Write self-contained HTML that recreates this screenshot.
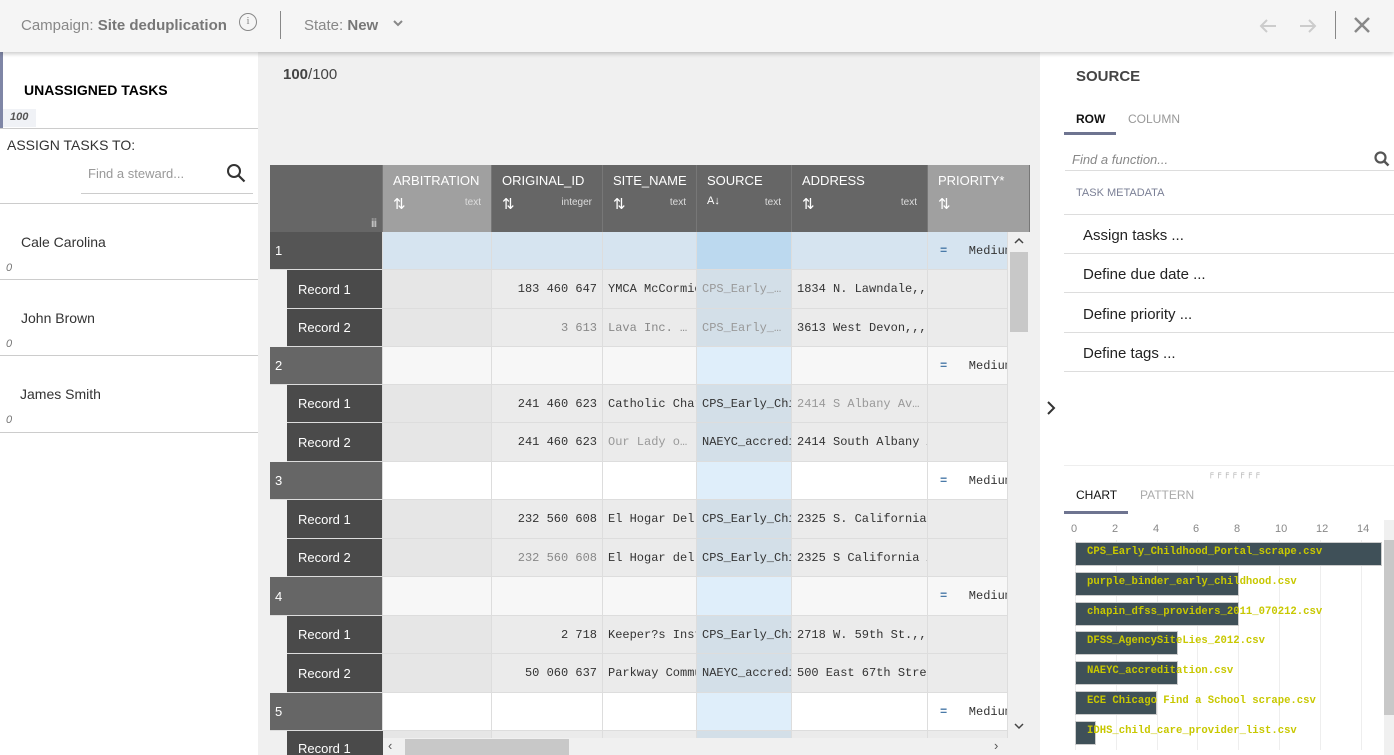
<!DOCTYPE html>
<html style="overflow:hidden;width:1394px;height:755px"><head><meta charset="utf-8"><style>
*{box-sizing:border-box;margin:0;padding:0}
body{width:1394px;height:755px;overflow:hidden;background:#f0f0f0;font-family:"Liberation Sans",sans-serif;position:relative}
.a{position:absolute}
.top{left:0;top:0;width:1394px;height:52px;background:#f5f5f5;box-shadow:0 2px 4px rgba(0,0,0,.2);z-index:5;color:#888;font-size:15px}
.left{left:0;top:52px;width:258px;height:703px;background:#fff}
.right{left:1040px;top:52px;width:354px;height:703px;background:#fff}
.row{position:absolute;left:270px;width:738px}
.c{position:absolute;top:0;bottom:0;border-right:1px solid #ddd;border-bottom:1px solid #ddd;font-family:"Liberation Mono",monospace;font-size:12px;color:#333;white-space:nowrap;overflow:hidden;padding:0 5px;display:flex;align-items:center}
.m{padding-left:12px}
.hd{position:absolute;top:165px;height:67px;background:#666;color:#fff;font-size:13px;padding:8px 10px;border-right:1px solid #777}
.hd small{position:absolute;right:10px;top:32px;font-size:10px;color:#ddd}
.hd i{position:absolute;left:10px;top:30px;font-style:normal;font-size:15px}
.steward{position:absolute;left:0;width:258px;border-bottom:1px solid #ccc;font-size:14px;color:#333}
.steward b{position:absolute;left:6px;font-style:italic;font-weight:normal;font-size:11px;color:#777}
.menu{position:absolute;left:1064px;width:330px;height:39px;border-bottom:1px solid #ddd;font-size:15px;color:#222;padding:12px 19px}
.bar{position:absolute;left:1075px;height:24px;background:#3f5058;border:1px solid #ccc}
.bl{position:absolute;left:1087px;font-family:"Liberation Mono",monospace;font-size:10.6px;color:#c8c800;font-weight:bold}
</style></head><body>
<div class="a top">
 <div class="a" style="left:21px;top:17px">Campaign: <b style="color:#777">Site deduplication</b></div>
 <div class="a" style="left:239px;top:13px;width:18px;height:18px;border:1.5px solid #888;border-radius:50%;font-size:11px;text-align:center;line-height:15px;font-family:'Liberation Serif',serif">i</div>
 <div class="a" style="left:280px;top:11px;width:1px;height:28px;background:#888"></div>
 <div class="a" style="left:304px;top:17px">State: <b style="color:#777">New</b></div>
 <svg class="a" style="left:392px;top:18px" width="12" height="10"><path d="M2 3l4 4 4-4" stroke="#888" stroke-width="2" fill="none"/></svg>
 <svg class="a" style="left:1258px;top:16px" width="20" height="20"><path d="M18 10H3M9 4L3 10l6 6" stroke="#ccc" stroke-width="2" fill="none"/></svg>
 <svg class="a" style="left:1298px;top:16px" width="20" height="20"><path d="M2 10h15M11 4l6 6-6 6" stroke="#ccc" stroke-width="2" fill="none"/></svg>
 <div class="a" style="left:1335px;top:11px;width:1px;height:28px;background:#888"></div>
 <svg class="a" style="left:1353px;top:16px" width="18" height="18"><path d="M2 2l14 14M16 2L2 16" stroke="#888" stroke-width="2.5"/></svg>
</div>

<div class="a left">
 <div class="a" style="left:0;top:0;width:3px;height:76px;background:#7f86a6"></div>
 <div class="a" style="left:24px;top:30px;font-size:14px;font-weight:bold;color:#000">UNASSIGNED TASKS</div>
 <div class="a" style="left:3px;top:57px;width:33px;height:18px;background:#f0f2f6;font-size:11px;font-style:italic;font-weight:bold;color:#555;padding:2px 7px">100</div>
 <div class="a" style="left:0;top:76px;width:258px;height:1px;background:#ccc"></div>
 <div class="a" style="left:7px;top:85px;font-size:14px;color:#333">ASSIGN TASKS TO:</div>
 <div class="a" style="left:88px;top:114px;font-size:13px;color:#999">Find a steward...</div>
 <svg class="a" style="left:226px;top:111px" width="20" height="20"><circle cx="8" cy="8" r="6" stroke="#333" stroke-width="2" fill="none"/><path d="M12.5 12.5l6 6" stroke="#333" stroke-width="2.2"/></svg>
 <div class="a" style="left:81px;top:141px;width:172px;height:1px;background:#ccc"></div>
 <div class="a" style="left:0;top:151px;width:258px;height:1px;background:#ccc"></div>
 <div class="steward" style="top:152px;height:76px"><span class="a" style="left:21px;top:30px">Cale Carolina</span><b style="top:58px">0</b></div>
 <div class="steward" style="top:228px;height:76px"><span class="a" style="left:21px;top:30px">John Brown</span><b style="top:58px">0</b></div>
 <div class="steward" style="top:304px;height:77px"><span class="a" style="left:20px;top:30px">James Smith</span><b style="top:58px">0</b></div>
</div>

<div class="a" style="left:283px;top:66px;font-size:15px;color:#444"><b>100</b>/100</div>

<div class="hd" style="left:270px;width:113px"><span class="a" style="right:6px;bottom:2px;font-size:12px;color:#ccc;letter-spacing:-1px">iii</span></div>
<div class="hd" style="left:383px;width:109px;background:#a0a0a0">ARBITRATION<i>⇅</i><small>text</small></div>
<div class="hd" style="left:492px;width:111px">ORIGINAL_ID<i>⇅</i><small>integer</small></div>
<div class="hd" style="left:603px;width:94px">SITE_NAME<i>⇅</i><small>text</small></div>
<div class="hd" style="left:697px;width:95px">SOURCE<i style="font-size:11px">A↓</i><small>text</small></div>
<div class="hd" style="left:792px;width:136px">ADDRESS<i>⇅</i><small>text</small></div>
<div class="hd" style="left:928px;width:102px;background:#a0a0a0">PRIORITY*<i>⇅</i></div>

<div class="a" style="left:270px;top:232px;width:738px;height:506px;overflow:hidden">
<div style="position:absolute;left:-270px;top:-232px;width:1100px;height:1000px">
<div class="row" style="top:232px;height:38px">
 <div class="c" style="left:0;width:113px;background:#555;color:#fff;font-family:'Liberation Sans';font-size:13px">1</div>
 <div class="c" style="left:113px;width:109px;background:#d6e4f0"></div>
 <div class="c" style="left:222px;width:111px;background:#d6e4f0"></div>
 <div class="c" style="left:333px;width:94px;background:#d6e4f0"></div>
 <div class="c" style="left:427px;width:95px;background:#bcd9ef"></div>
 <div class="c" style="left:522px;width:136px;background:#d6e4f0"></div>
 <div class="c m" style="left:658px;width:80px;background:#d6e4f0"><span style="color:#4a7aa8;font-weight:bold">=</span>&nbsp;&nbsp;&nbsp;Medium</div>
</div>
<div class="row" style="top:270px;height:39px"><div class="c" style="left:0;width:17px;background:#f0f0f0;border:0"></div><div class="c" style="left:17px;width:96px;background:#4a4a4a;color:#fff;font-family:'Liberation Sans';font-size:13px;padding-left:11px">Record 1</div><div class="c" style="left:113px;width:109px;background:#e6e6e6"></div><div class="c" style="left:222px;width:111px;background:#ebebeb;justify-content:flex-end">183 460 647</div><div class="c" style="left:333px;width:94px;background:#ebebeb">YMCA McCormick</div><div class="c" style="left:427px;width:95px;background:#d3dfe8;color:#999">CPS_Early_…</div><div class="c" style="left:522px;width:136px;background:#ebebeb">1834 N. Lawndale,,</div><div class="c" style="left:658px;width:80px;background:#ebebeb"></div></div>
<div class="row" style="top:309px;height:38px"><div class="c" style="left:0;width:17px;background:#f0f0f0;border:0"></div><div class="c" style="left:17px;width:96px;background:#4a4a4a;color:#fff;font-family:'Liberation Sans';font-size:13px;padding-left:11px">Record 2</div><div class="c" style="left:113px;width:109px;background:#e6e6e6"></div><div class="c" style="left:222px;width:111px;background:#ebebeb;justify-content:flex-end;color:#888">3 613</div><div class="c" style="left:333px;width:94px;background:#ebebeb;color:#888">Lava Inc. …</div><div class="c" style="left:427px;width:95px;background:#d3dfe8;color:#999">CPS_Early_…</div><div class="c" style="left:522px;width:136px;background:#ebebeb">3613 West Devon,,,</div><div class="c" style="left:658px;width:80px;background:#ebebeb"></div></div>

<div class="row" style="top:347px;height:38px"><div class="c" style="left:0;width:113px;background:#666;color:#fff;font-family:'Liberation Sans';font-size:13px">2</div><div class="c" style="left:113px;width:109px;background:#f7f7f7"></div><div class="c" style="left:222px;width:111px;background:#f7f7f7"></div><div class="c" style="left:333px;width:94px;background:#f7f7f7"></div><div class="c" style="left:427px;width:95px;background:#dfeefa"></div><div class="c" style="left:522px;width:136px;background:#f7f7f7"></div><div class="c m" style="left:658px;width:80px;background:#f7f7f7"><span style="color:#4a7aa8;font-weight:bold">=</span>&nbsp;&nbsp;&nbsp;Medium</div></div>
<div class="row" style="top:385px;height:38px"><div class="c" style="left:0;width:17px;background:#f0f0f0;border:0"></div><div class="c" style="left:17px;width:96px;background:#4a4a4a;color:#fff;font-family:'Liberation Sans';font-size:13px;padding-left:11px">Record 1</div><div class="c" style="left:113px;width:109px;background:#e6e6e6"></div><div class="c" style="left:222px;width:111px;background:#ebebeb;justify-content:flex-end">241 460 623</div><div class="c" style="left:333px;width:94px;background:#ebebeb">Catholic Charities</div><div class="c" style="left:427px;width:95px;background:#d3dfe8">CPS_Early_Childhood</div><div class="c" style="left:522px;width:136px;background:#ebebeb;color:#999">2414 S Albany Av…</div><div class="c" style="left:658px;width:80px;background:#ebebeb"></div></div>
<div class="row" style="top:423px;height:39px"><div class="c" style="left:0;width:17px;background:#f0f0f0;border:0"></div><div class="c" style="left:17px;width:96px;background:#4a4a4a;color:#fff;font-family:'Liberation Sans';font-size:13px;padding-left:11px">Record 2</div><div class="c" style="left:113px;width:109px;background:#e6e6e6"></div><div class="c" style="left:222px;width:111px;background:#ebebeb;justify-content:flex-end">241 460 623</div><div class="c" style="left:333px;width:94px;background:#ebebeb;color:#999">Our Lady o…</div><div class="c" style="left:427px;width:95px;background:#d3dfe8">NAEYC_accreditation</div><div class="c" style="left:522px;width:136px;background:#ebebeb">2414 South Albany Ave</div><div class="c" style="left:658px;width:80px;background:#ebebeb"></div></div>

<div class="row" style="top:462px;height:38px"><div class="c" style="left:0;width:113px;background:#666;color:#fff;font-family:'Liberation Sans';font-size:13px">3</div><div class="c" style="left:113px;width:109px;background:#fff"></div><div class="c" style="left:222px;width:111px;background:#fff"></div><div class="c" style="left:333px;width:94px;background:#fff"></div><div class="c" style="left:427px;width:95px;background:#dfeefa"></div><div class="c" style="left:522px;width:136px;background:#fff"></div><div class="c m" style="left:658px;width:80px;background:#fff"><span style="color:#4a7aa8;font-weight:bold">=</span>&nbsp;&nbsp;&nbsp;Medium</div></div>
<div class="row" style="top:500px;height:39px"><div class="c" style="left:0;width:17px;background:#f0f0f0;border:0"></div><div class="c" style="left:17px;width:96px;background:#4a4a4a;color:#fff;font-family:'Liberation Sans';font-size:13px;padding-left:11px">Record 1</div><div class="c" style="left:113px;width:109px;background:#e6e6e6"></div><div class="c" style="left:222px;width:111px;background:#ebebeb;justify-content:flex-end">232 560 608</div><div class="c" style="left:333px;width:94px;background:#ebebeb">El Hogar Del Nino</div><div class="c" style="left:427px;width:95px;background:#d3dfe8">CPS_Early_Childhood</div><div class="c" style="left:522px;width:136px;background:#ebebeb">2325 S. California</div><div class="c" style="left:658px;width:80px;background:#ebebeb"></div></div>
<div class="row" style="top:539px;height:38px"><div class="c" style="left:0;width:17px;background:#f0f0f0;border:0"></div><div class="c" style="left:17px;width:96px;background:#4a4a4a;color:#fff;font-family:'Liberation Sans';font-size:13px;padding-left:11px">Record 2</div><div class="c" style="left:113px;width:109px;background:#e6e6e6"></div><div class="c" style="left:222px;width:111px;background:#ebebeb;justify-content:flex-end;color:#888">232 560 608</div><div class="c" style="left:333px;width:94px;background:#ebebeb">El Hogar del Nino</div><div class="c" style="left:427px;width:95px;background:#d3dfe8">CPS_Early_Childhood</div><div class="c" style="left:522px;width:136px;background:#ebebeb">2325 S California Ave</div><div class="c" style="left:658px;width:80px;background:#ebebeb"></div></div>

<div class="row" style="top:577px;height:39px"><div class="c" style="left:0;width:113px;background:#666;color:#fff;font-family:'Liberation Sans';font-size:13px">4</div><div class="c" style="left:113px;width:109px;background:#f7f7f7"></div><div class="c" style="left:222px;width:111px;background:#f7f7f7"></div><div class="c" style="left:333px;width:94px;background:#f7f7f7"></div><div class="c" style="left:427px;width:95px;background:#dfeefa"></div><div class="c" style="left:522px;width:136px;background:#f7f7f7"></div><div class="c m" style="left:658px;width:80px;background:#f7f7f7"><span style="color:#4a7aa8;font-weight:bold">=</span>&nbsp;&nbsp;&nbsp;Medium</div></div>
<div class="row" style="top:616px;height:38px"><div class="c" style="left:0;width:17px;background:#f0f0f0;border:0"></div><div class="c" style="left:17px;width:96px;background:#4a4a4a;color:#fff;font-family:'Liberation Sans';font-size:13px;padding-left:11px">Record 1</div><div class="c" style="left:113px;width:109px;background:#e6e6e6"></div><div class="c" style="left:222px;width:111px;background:#ebebeb;justify-content:flex-end">2 718</div><div class="c" style="left:333px;width:94px;background:#ebebeb">Keeper?s Institute</div><div class="c" style="left:427px;width:95px;background:#d3dfe8">CPS_Early_Childhood</div><div class="c" style="left:522px;width:136px;background:#ebebeb">2718 W. 59th St.,,</div><div class="c" style="left:658px;width:80px;background:#ebebeb"></div></div>
<div class="row" style="top:654px;height:39px"><div class="c" style="left:0;width:17px;background:#f0f0f0;border:0"></div><div class="c" style="left:17px;width:96px;background:#4a4a4a;color:#fff;font-family:'Liberation Sans';font-size:13px;padding-left:11px">Record 2</div><div class="c" style="left:113px;width:109px;background:#e6e6e6"></div><div class="c" style="left:222px;width:111px;background:#ebebeb;justify-content:flex-end">50 060 637</div><div class="c" style="left:333px;width:94px;background:#ebebeb">Parkway Community</div><div class="c" style="left:427px;width:95px;background:#d3dfe8">NAEYC_accreditation</div><div class="c" style="left:522px;width:136px;background:#ebebeb">500 East 67th Street</div><div class="c" style="left:658px;width:80px;background:#ebebeb"></div></div>

<div class="row" style="top:693px;height:38px"><div class="c" style="left:0;width:113px;background:#666;color:#fff;font-family:'Liberation Sans';font-size:13px">5</div><div class="c" style="left:113px;width:109px;background:#fff"></div><div class="c" style="left:222px;width:111px;background:#fff"></div><div class="c" style="left:333px;width:94px;background:#fff"></div><div class="c" style="left:427px;width:95px;background:#dfeefa"></div><div class="c" style="left:522px;width:136px;background:#fff"></div><div class="c m" style="left:658px;width:80px;background:#fff"><span style="color:#4a7aa8;font-weight:bold">=</span>&nbsp;&nbsp;&nbsp;Medium</div></div>
<div class="row" style="top:731px;height:38px"><div class="c" style="left:0;width:17px;background:#f0f0f0;border:0"></div><div class="c" style="left:17px;width:96px;background:#4a4a4a;border:0"></div><div class="c" style="left:113px;width:109px;background:#e6e6e6"></div><div class="c" style="left:222px;width:111px;background:#ebebeb"></div><div class="c" style="left:333px;width:94px;background:#ebebeb"></div><div class="c" style="left:427px;width:95px;background:#d3dfe8"></div><div class="c" style="left:522px;width:136px;background:#ebebeb"></div><div class="c" style="left:658px;width:80px;background:#ebebeb"></div></div>
</div></div>
<div class="a" style="left:287px;top:738px;width:96px;height:17px;background:#4a4a4a;color:#fff;font-size:13px;padding:3px 11px;overflow:hidden">Record 1</div>
<div class="a" style="left:383px;top:738px;width:625px;height:17px;background:#f0f0f0"></div>
<div class="a" style="left:405px;top:739px;width:164px;height:16px;background:#c8c8c8"></div>
<div class="a" style="left:388px;top:738px;font-size:13px;color:#555">‹</div>
<div class="a" style="left:994px;top:738px;font-size:13px;color:#555">›</div>
<div class="a" style="left:1008px;top:232px;width:22px;height:506px;background:#f0f0f0"></div>
<div class="a" style="left:1010px;top:252px;width:18px;height:80px;background:#c8c8c8"></div>
<svg class="a" style="left:1014px;top:237px" width="10" height="8"><path d="M1 6l4-4 4 4" stroke="#444" stroke-width="1.5" fill="none"/></svg>
<svg class="a" style="left:1014px;top:722px" width="10" height="8"><path d="M1 2l4 4 4-4" stroke="#444" stroke-width="1.5" fill="none"/></svg>

<div class="a right">
 <svg class="a" style="left:6px;top:348px" width="10" height="16"><path d="M2 2l6 6-6 6" stroke="#333" stroke-width="2" fill="none"/></svg>
 <div class="a" style="left:36px;top:16px;font-size:15px;font-weight:bold;color:#444">SOURCE</div>
 <div class="a" style="left:36px;top:60px;font-size:12px;font-weight:bold;color:#111">ROW</div>
 <div class="a" style="left:88px;top:60px;font-size:12px;color:#999">COLUMN</div>
 <div class="a" style="left:24px;top:80px;width:52px;height:3px;background:#6e7490"></div>
 <div class="a" style="left:32px;top:100px;font-size:13px;font-style:italic;color:#888">Find a function...</div>
 <svg class="a" style="left:334px;top:99px" width="16" height="16"><circle cx="6.5" cy="6.5" r="5" stroke="#555" stroke-width="2.2" fill="none"/><path d="M10 10l4.5 4.5" stroke="#555" stroke-width="2.5"/></svg>
 <div class="a" style="left:25px;top:118px;width:329px;height:1px;background:#ddd"></div>
 <div class="a" style="left:36px;top:135px;font-size:11px;color:#7a7f95">TASK METADATA</div>
</div>
<div class="a" style="left:1064px;top:214px;width:330px;height:1px;background:#ddd"></div>
<div class="menu" style="top:215px">Assign tasks ...</div>
<div class="menu" style="top:254px">Define due date ...</div>
<div class="menu" style="top:294px">Define priority ...</div>
<div class="menu" style="top:333px">Define tags ...</div>
<div class="a" style="left:1064px;top:465px;width:330px;height:1px;background:#eee"></div>
<div class="a" style="left:1208px;top:469px;font-size:8px;color:#aaa;letter-spacing:2px">╒╒╒╒╒╒╒</div>
<div class="a" style="left:1076px;top:488px;font-size:12px;color:#111">CHART</div>
<div class="a" style="left:1140px;top:488px;font-size:12px;color:#aaa">PATTERN</div>
<div class="a" style="left:1064px;top:511px;width:64px;height:3px;background:#6e7490"></div>
<div class="a" style="left:1075px;top:540px;width:310px;height:210px">
 <div class="a" style="left:0;top:0;width:1px;height:210px;background:#eee"></div>
 <div class="a" style="left:41px;top:0;width:1px;height:210px;background:#eee"></div>
 <div class="a" style="left:82px;top:0;width:1px;height:210px;background:#eee"></div>
 <div class="a" style="left:122px;top:0;width:1px;height:210px;background:#eee"></div>
 <div class="a" style="left:163px;top:0;width:1px;height:210px;background:#eee"></div>
 <div class="a" style="left:204px;top:0;width:1px;height:210px;background:#eee"></div>
 <div class="a" style="left:245px;top:0;width:1px;height:210px;background:#eee"></div>
 <div class="a" style="left:286px;top:0;width:1px;height:210px;background:#eee"></div>
</div>
<div class="a" style="top:523px;left:1071px;font-size:11px;color:#888;width:320px;height:14px">
 <span class="a" style="left:0">0</span><span class="a" style="left:41px">2</span><span class="a" style="left:82px">4</span><span class="a" style="left:122px">6</span><span class="a" style="left:163px">8</span><span class="a" style="left:204px">10</span><span class="a" style="left:245px">12</span><span class="a" style="left:286px">14</span>
</div>
<div class="bar" style="top:542px;width:307px"></div>
<div class="bar" style="top:572px;width:164px"></div>
<div class="bar" style="top:602px;width:164px"></div>
<div class="bar" style="top:631px;width:103px"></div>
<div class="bar" style="top:661px;width:103px"></div>
<div class="bar" style="top:691px;width:82px"></div>
<div class="bar" style="top:721px;width:21px"></div>
<div class="bl" style="top:546px">CPS_Early_Childhood_Portal_scrape.csv</div>
<div class="bl" style="top:576px">purple_binder_early_childhood.csv</div>
<div class="bl" style="top:606px">chapin_dfss_providers_2011_070212.csv</div>
<div class="bl" style="top:635px">DFSS_AgencySiteLies_2012.csv</div>
<div class="bl" style="top:665px">NAEYC_accreditation.csv</div>
<div class="bl" style="top:695px">ECE Chicago Find a School scrape.csv</div>
<div class="bl" style="top:725px">IDHS_child_care_provider_list.csv</div>
<div class="a" style="left:1384px;top:520px;width:10px;height:235px;background:#f0f0f0"></div>
<div class="a" style="left:1384px;top:540px;width:10px;height:175px;background:#c8c8c8"></div>
</body></html>
